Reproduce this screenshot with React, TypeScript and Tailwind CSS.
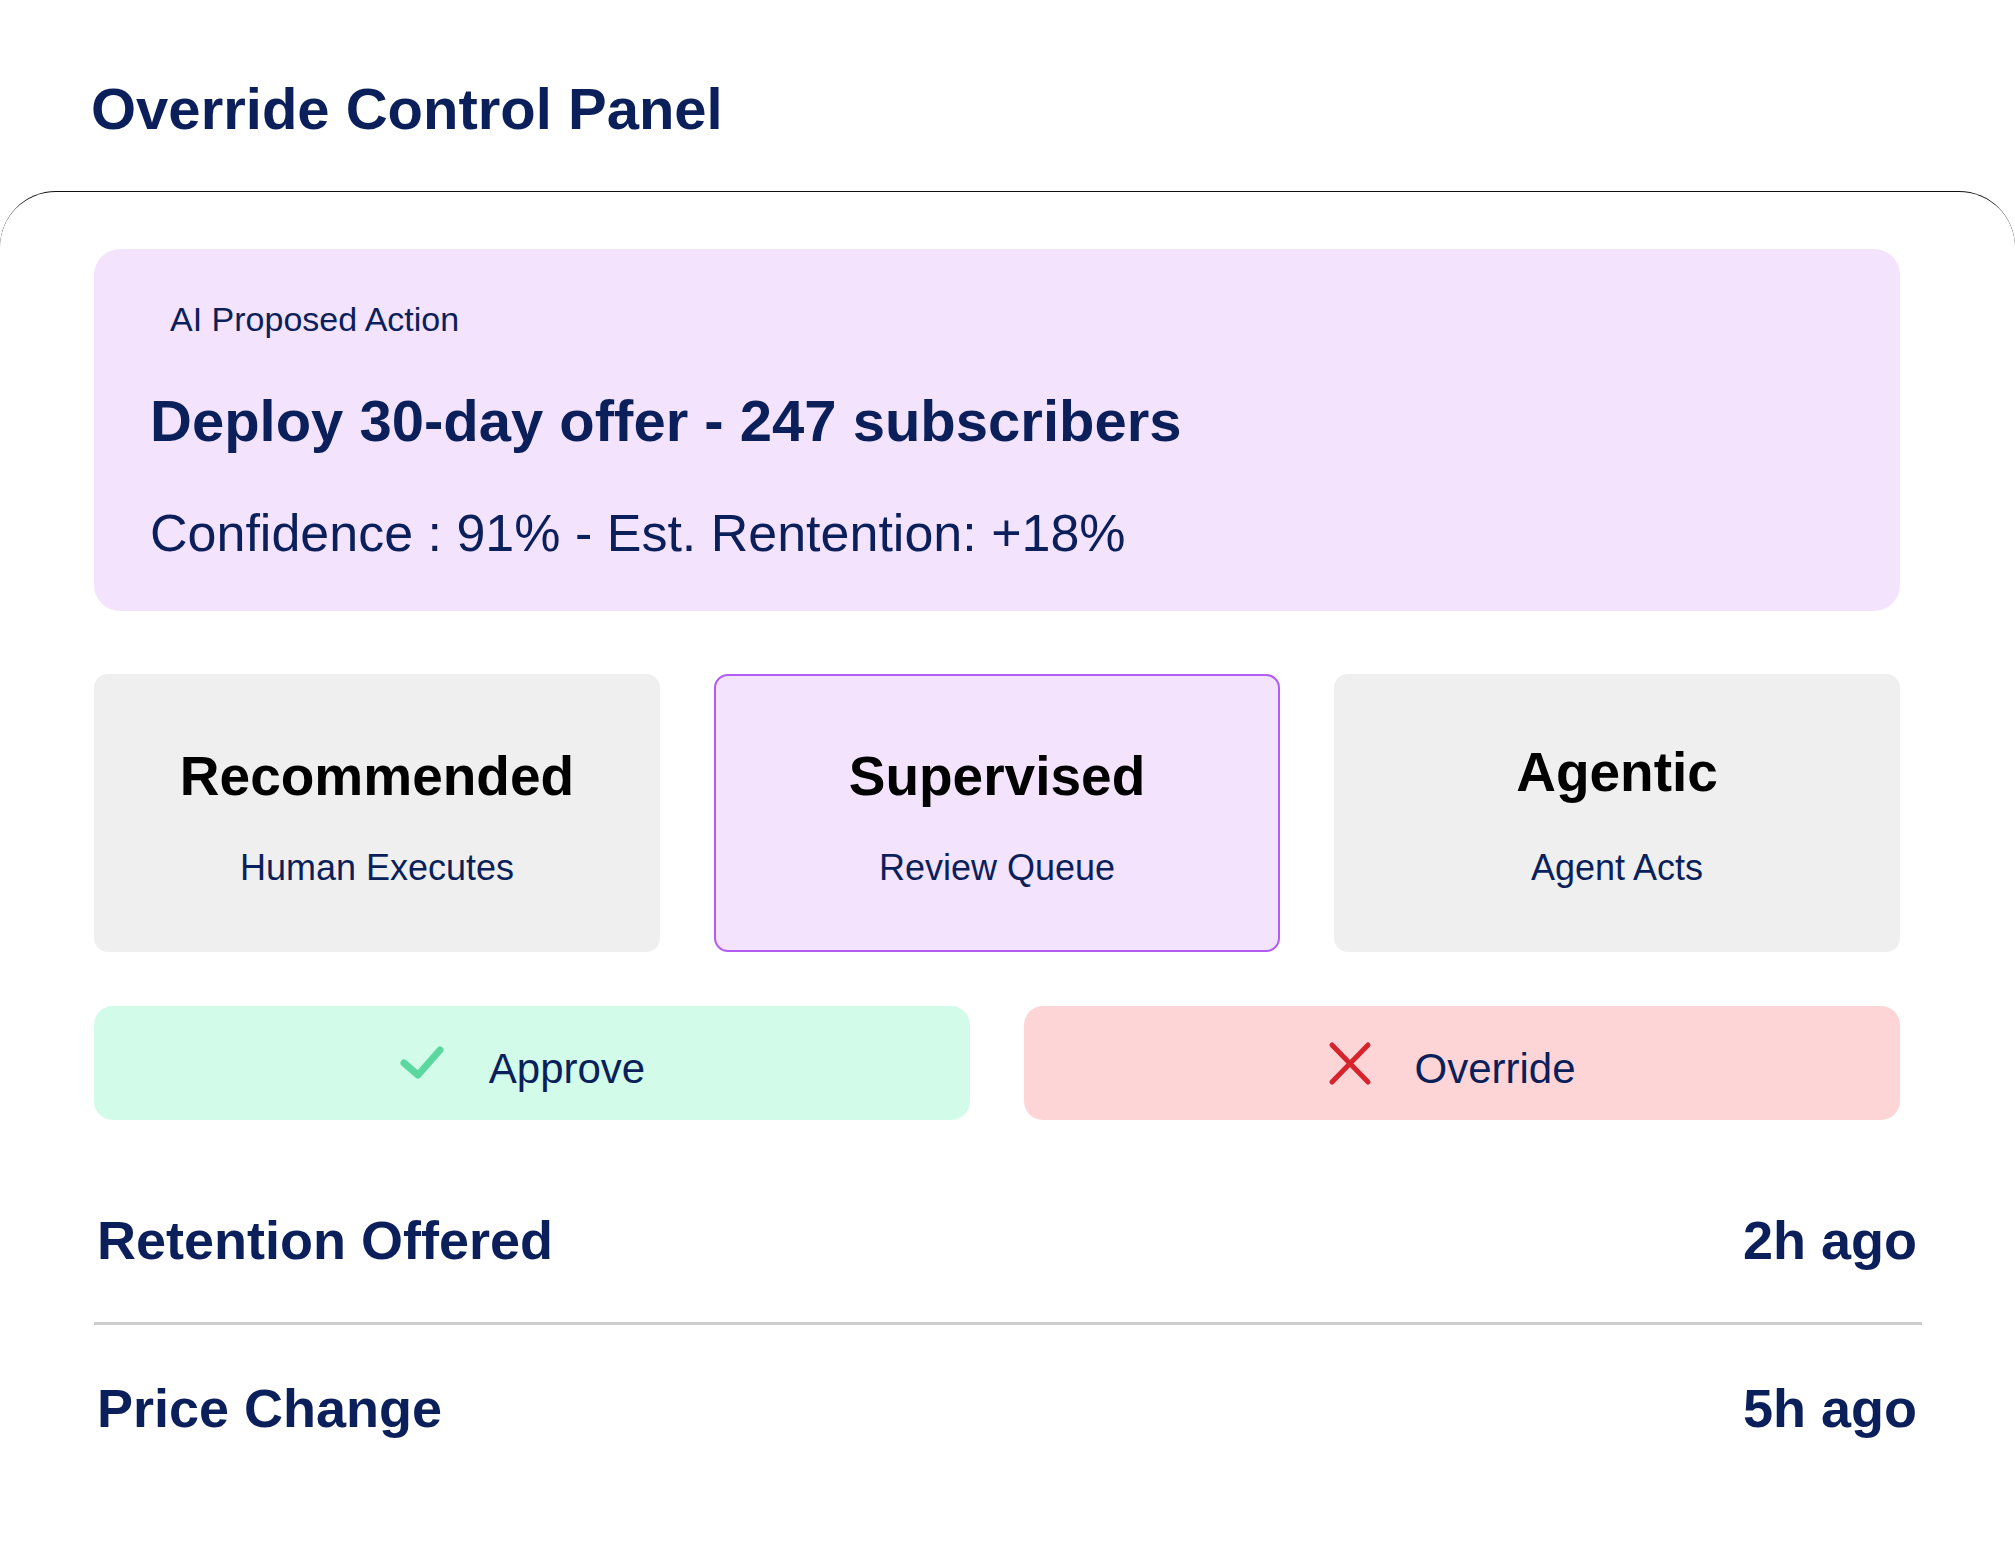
import { useState } from "react";

const modes = [
  { title: "Recommended", sub: "Human Executes", titleClass: "pt-[75px]", subClass: "mt-[46px]" },
  { title: "Supervised", sub: "Review Queue", titleClass: "pt-[73px]", subClass: "mt-[46px]" },
  { title: "Agentic", sub: "Agent Acts", titleClass: "pt-[71px]", subClass: "mt-[50px]" },
];

const activity = [
  { label: "Retention Offered", time: "2h ago" },
  { label: "Price Change", time: "5h ago" },
];

const CheckIcon = () => (
  <svg width="46" height="36" viewBox="0 0 46 36" fill="none">
    <path
      d="M5 18 L19 30 L41 5"
      stroke="#5bd8a0"
      strokeWidth="7"
      strokeLinecap="round"
      strokeLinejoin="round"
    />
  </svg>
);

const CrossIcon = () => (
  <svg width="44" height="45" viewBox="0 0 44 45" fill="none">
    <path
      d="M4 4 L40 41 M40 4 L4 41"
      stroke="#d7232b"
      strokeWidth="5"
      strokeLinecap="round"
    />
  </svg>
);

const App = () => {
  const [mode, setMode] = useState(modes[1].title);

  return (
    <div className="min-h-screen bg-white font-['Liberation_Sans',Arial,sans-serif] text-[#0b1f5b]">
      <h1 className="pl-[91px] pt-[80px] text-[58px] font-bold leading-none">
        Override Control Panel
      </h1>

      <section className="mt-[53px] rounded-t-[56px] border-t-[1.5px] border-[#111] pl-[94px] pr-[93px] pt-[57px] pb-[40px]">
        <div className="pr-[22px]">
          {/* proposed action */}
          <div className="rounded-[26px] bg-[#f3e3fd] pt-[53px] pb-[52px] pl-[56px]">
            <div className="pl-[20px] text-[34px] leading-none">AI Proposed Action</div>
            <div className="mt-[56px] text-[58px] font-bold leading-none">
              Deploy 30-day offer - 247 subscribers
            </div>
            <div className="mt-[57px] text-[52px] leading-none">
              Confidence : 91% - Est. Rentention: +18%
            </div>
          </div>

          {/* autonomy modes */}
          <div className="mt-[63px] grid grid-cols-3 gap-[54px]">
            {modes.map((m) => (
              <div
                key={m.title}
                onClick={() => setMode(m.title)}
                className={`flex h-[278px] cursor-pointer flex-col items-center rounded-[14px] ${
                  mode === m.title
                    ? "border-2 border-[#b25cf3] bg-[#f3e3fd]"
                    : "bg-[#efefef]"
                }`}
              >
                <div className={`text-[55px] font-bold leading-none text-black ${m.titleClass}`}>
                  {m.title}
                </div>
                <div className={`text-[36px] leading-none ${m.subClass}`}>{m.sub}</div>
              </div>
            ))}
          </div>

          {/* actions */}
          <div className="mt-[54px] flex gap-[54px]">
            <button className="flex h-[114px] flex-1 items-center justify-center gap-[44px] rounded-[19px] bg-[#d2fbe9] pr-[20px]">
              <CheckIcon />
              <span className="mt-[12px] text-[42px] leading-none">Approve</span>
            </button>
            <button className="flex h-[114px] flex-1 items-center justify-center gap-[42px] rounded-[19px] bg-[#fdd5d7] pr-[20px]">
              <CrossIcon />
              <span className="mt-[12px] text-[42px] leading-none">Override</span>
            </button>
          </div>
        </div>

        {/* recent activity */}
        <div className="mt-[38px]">
          {activity.map((a, i) => (
            <div key={a.label}>
              {i > 0 && <div className="h-[3px] bg-[#cccccc]"></div>}
              <div
                className={`flex items-center justify-between pl-[3px] pr-[5px] text-[54px] font-bold leading-none ${
                  i === 0 ? "py-[55px]" : "py-[56px]"
                }`}
              >
                <span>{a.label}</span>
                <span>{a.time}</span>
              </div>
            </div>
          ))}
        </div>
      </section>
    </div>
  );
};
export default App;
